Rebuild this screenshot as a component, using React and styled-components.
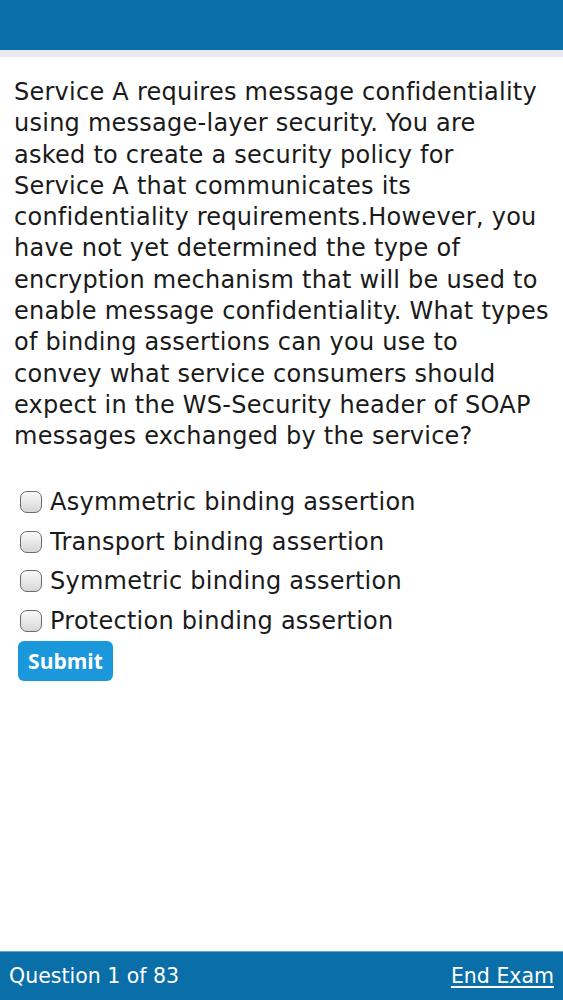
import React from "react";
import styled, { createGlobalStyle } from "styled-components";

const GlobalStyle = createGlobalStyle`
  html, body {
    margin: 0;
    padding: 0;
    background: #ffffff;
    font-family: "DejaVu Sans", Verdana, sans-serif;
  }
`;

const Page = styled.div`
  display: flex;
  flex-direction: column;
  height: 1000px;
  background: #ffffff;
`;

const TopBar = styled.div`
  height: 50px;
  background: #0a6ea8;
  border-bottom: 7px solid #e6eaee;
  flex-shrink: 0;
`;

const Content = styled.div`
  flex-grow: 1;
  padding: 20px 14px 0 14px;
`;

const Question = styled.p`
  margin: 0;
  font-size: 24px;
  line-height: 31.3px;
  color: #1a1a1a;
  letter-spacing: 0.25px;
`;

const Line = styled.span`
  display: block;
  white-space: nowrap;
`;

const Options = styled.div`
  margin-top: 30px;
  padding-left: 6px;
  display: flex;
  flex-direction: column;
`;

const Option = styled.label`
  display: flex;
  align-items: center;
  height: 39.5px;
  font-size: 24px;
  letter-spacing: 0.25px;
  color: #1a1a1a;
`;

const Box = styled.span`
  width: 20px;
  height: 20px;
  border: 1.5px solid #6a6a6a;
  border-radius: 7px;
  background: linear-gradient(#fafafa, #d6d6d6);
  margin-right: 8px;
  flex-shrink: 0;
`;

const SubmitButton = styled.button`
  margin-top: 0;
  margin-left: -2px;
  width: 95px;
  height: 40px;
  border: none;
  border-radius: 6px;
  background: #1b97db;
  color: #ffffff;
  font-family: "Open Sans", "DejaVu Sans", sans-serif;
  font-weight: 700;
  font-size: 21px;
  padding: 0;
  align-self: flex-start;
`;

const Footer = styled.div`
  height: 48px;
  background: #0a6ea8;
  border-top: 1px solid #5aa6d4;
  display: flex;
  align-items: center;
  justify-content: space-between;
  padding: 0 9px;
  flex-shrink: 0;
  color: #ffffff;
  font-size: 20.5px;
`;

const EndLink = styled.a`
  color: #ffffff;
  text-decoration: underline;
  text-underline-offset: 3px;
`;

const questionLines = [
  "Service A requires message confidentiality",
  "using message-layer security. You are",
  "asked to create a security policy for",
  "Service A that communicates its",
  "confidentiality requirements.However, you",
  "have not yet determined the type of",
  "encryption mechanism that will be used to",
  "enable message confidentiality. What types",
  "of binding assertions can you use to",
  "convey what service consumers should",
  "expect in the WS-Security header of SOAP",
  "messages exchanged by the service?",
];

const answers = [
  "Asymmetric binding assertion",
  "Transport binding assertion",
  "Symmetric binding assertion",
  "Protection binding assertion",
];

export default function App() {
  return (
    <Page>
      <GlobalStyle />
      <TopBar />
      <Content>
        <Question>
          {questionLines.map((l) => (
            <Line key={l}>{l}</Line>
          ))}
        </Question>
        <Options>
          {answers.map((a) => (
            <Option key={a}>
              <Box />
              {a}
            </Option>
          ))}
          <SubmitButton>Submit</SubmitButton>
        </Options>
      </Content>
      <Footer>
        <span>Question 1 of 83</span>
        <EndLink>End Exam</EndLink>
      </Footer>
    </Page>
  );
}
